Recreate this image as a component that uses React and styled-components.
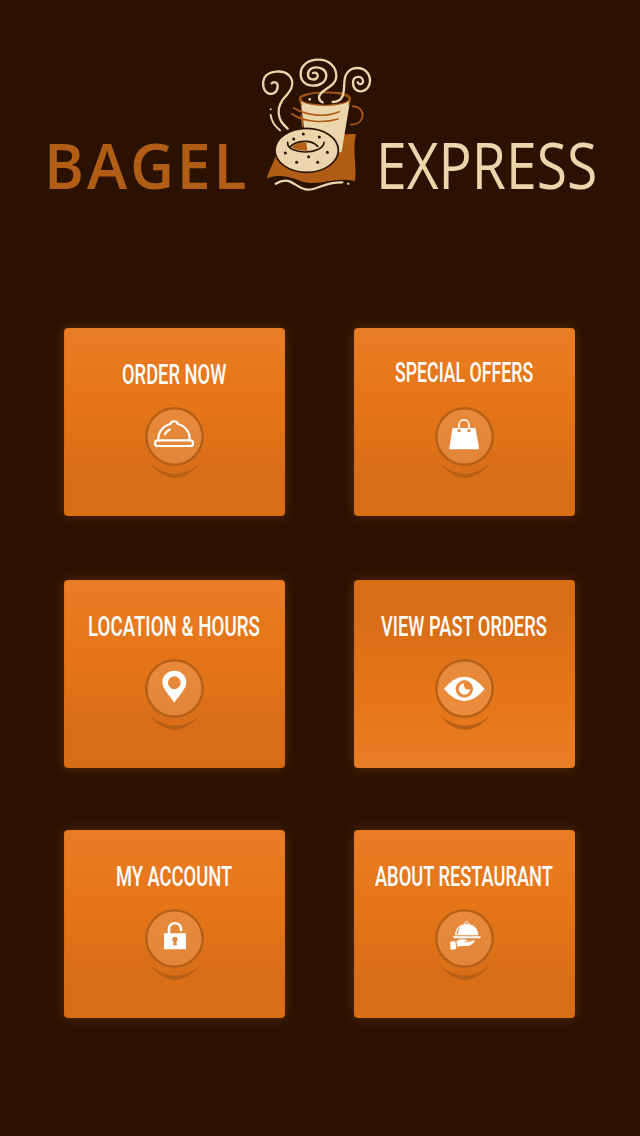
import { useLayoutEffect, useRef, useState } from "react";
import styled, { createGlobalStyle } from "styled-components";

const GlobalStyle = createGlobalStyle`
body{
  margin:0;
  background-color:#2b1200;
}
`;

const Page = styled.div`
  box-sizing:border-box;
  width:640px;
  height:1136px;
  padding-top:50px;
  background-color:#2b1200;
  overflow:hidden;
`;

const Header = styled.header`
  display:flex;
  align-items:flex-start;
  height:278px;
  padding-left:44px;
`;

const Word = styled.div`
  width:${props => props.$width}px;
  margin-top:71px;
  color:${props => props.$color};
  font-family:"Open Sans", sans-serif;
  font-size:64px;
  font-weight:${props => props.$weight};
  letter-spacing:${props => props.$spacing || 0}px;
  line-height:88px;
`;

const LogoArt = styled.svg`
  flex:none;
  width:130px;
  height:150px;
  margin:0 -4px 0 4px;
`;

const Menu = styled.nav`
  display:grid;
  grid-template-columns:221px 221px;
  grid-template-rows:188px 188px 188px;
  column-gap:69px;
  row-gap:64px;
  margin-left:64px;
`;

const Card = styled.a`
  display:flex;
  flex-direction:column;
  align-items:center;
  box-sizing:border-box;
  height:188px;
  margin-top:${props => props.$shift || 0}px;
  padding-top:${props => props.$top || 30}px;
  border-radius:4px;
  color:#fff;
  text-decoration:none;
  background:linear-gradient(${props => props.$flip ? "to top" : "to bottom"}, #e97d25 0%, #e67517 40%, #d96e17 80%, #d96e17 100%);
  box-shadow:0 0 12px rgba(232,124,36,.25), inset 0 0 1px rgba(150,70,5,.7);
`;

const Title = styled.div`
  width:${props => props.$width}px;
  height:${props => props.$height || 49}px;
  font-family:Roboto, sans-serif;
  font-size:28px;
  font-weight:500;
  line-height:34px;
`;

const Fitted = styled.span`
  display:inline-block;
  white-space:nowrap;
  transform-origin:left center;
`;

const Badge = styled.div`
  width:59px;
  height:59px;
  border-radius:50%;
  background-color:rgba(255,240,220,.18);
  box-shadow:inset 0 0 0 2.5px #b65f15;
`;

const Icon = styled.svg`
  display:block;
  width:59px;
  height:59px;
  fill:#fff;
`;

const Crescent = styled.svg`
  display:block;
  width:52px;
  height:16px;
  margin-top:-3px;
  fill:#b65f15;
`;

// squeezes a line of text to the width of its box
function FitText({ width, children }) {
  const ref = useRef(null);
  const [scale, setScale] = useState(1);
  useLayoutEffect(() => {
    setScale(width / ref.current.offsetWidth);
  }, [width, children]);
  return (
    <Fitted ref={ref} style={{ transform: `scaleX(${scale})` }}>{children}</Fitted>
  );
}

function ClocheIcon() {
  return (
    <Icon viewBox="273 266 177 177">
      <g fill="none" stroke="#fff" strokeWidth="6.5" strokeLinecap="round" strokeLinejoin="round">
        <path d="M313 365C312 342 326 323 350 317C351 306 370 306 371 317C395 323 408 342 407 365" />
        <rect x="303" y="366" width="114" height="17" rx="8.5" />
        <path d="M333 347Q338 338 347 334" strokeWidth="7" />
      </g>
    </Icon>
  );
}

function BagIcon() {
  return (
    <Icon viewBox="273 266 177 177">
      <path d="M345 333V320C345 300 375 300 375 320V333" fill="none" stroke="#fff" strokeWidth="5" />
      <path fillRule="evenodd" d="M328 329H392Q394 329 395 332L405 389Q405 393 402 393H318Q315 393 316 389L325 332Q326 329 328 329ZM345 332a5 5 0 1 0 .1 0ZM375 332a5 5 0 1 0 .1 0Z" />
    </Icon>
  );
}

function PinIcon() {
  return (
    <Icon viewBox="273 266 177 177">
      <path fillRule="evenodd" d="M361 398C352 380 325 358 325 336A36 35 0 0 1 397 336C397 358 370 380 361 398ZM361 318a19 19 0 1 0 .1 0Z" />
    </Icon>
  );
}

function EyeIcon() {
  return (
    <Icon viewBox="273 266 177 177">
      <path fillRule="evenodd" d="M300 356Q329 319 361 319Q393 319 422 356Q393 392 361 392Q329 392 300 356ZM361 330a26 26 0 1 0 .1 0Z" />
      <path d="M360 339A17 17 0 1 0 378 356Q369 360 364 355Q358 350 360 339Z" />
    </Icon>
  );
}

function LockIcon() {
  return (
    <Icon viewBox="273 266 177 177">
      <path d="M345 342V326C345 303 381 303 381 326V329" fill="none" stroke="#fff" strokeWidth="7.5" strokeLinecap="round" />
      <path fillRule="evenodd" d="M330 339H396V387H330ZM363 349A8 8 0 0 0 359 364L357 375H369L367 364A8 8 0 0 0 363 349Z" />
    </Icon>
  );
}

function ServeIcon() {
  return (
    <Icon viewBox="273 266 177 177">
      <circle cx="368" cy="310" r="5.5" fill="none" stroke="#fff" strokeWidth="3" />
      <path fillRule="evenodd" d="M333 345C333 323 349 311 368 311C387 311 403 323 403 345ZM338 342H343C342 332 345 325 350 319C341 325 338 333 338 342Z" />
      <path d="M326 348H411L408 354H332Q328 354 326 348Z" />
      <path d="M318 364L334 362L337 386L320 388Z" />
      <path d="M337 363C344 357 353 356 359 357L370 359C374 361 371 363 359 365C370 368 379 362 391 360C394 361 391 365 385 370C377 377 370 378 361 377C352 376 346 378 340 380Z" />
    </Icon>
  );
}

function Logo() {
  return (
    <LogoArt viewBox="0 0 390 450" fill="none" strokeLinecap="round" strokeLinejoin="round">
      <path d="M77 299C79 336 56 353 51 385C94 369 127 385 158 395C214 409 251 379 315 393C321 345 306 299 318 253C291 250 286 257 258 251L100 287Z" fill="#b15d16" />
      <path d="M151 148L164 248C180 293 229 310 275 306L301 148Z" fill="#ebd5ad" />
      <path d="M154 165L148 144C151 125 298 116 301 145L297 164" stroke="#a75718" strokeWidth="4" />
      <ellipse cx="225" cy="147" rx="73" ry="19" fill="#2b1200" stroke="#a75718" strokeWidth="4" />
      <path d="M131 174C164 194 220 205 268 185M126 192C163 218 225 219 264 207M154 195L158 230M308 169C348 168 350 224 303 224" stroke="#b15d16" strokeWidth="5" />
      <g stroke="#ebd5ad" strokeWidth="7">
        <path d="M65 100C72 93 84 97 83 110C82 127 68 135 55 130C38 122 36 98 43 84C55 62 98 58 117 76C134 95 126 117 112 133C94 150 84 166 86 190C88 212 98 222 113 236" />
        <path d="M189 69C198 65 205 72 203 80C199 92 175 92 174 75C173 60 184 52 198 52C218 52 229 63 229 77C228 96 211 107 190 107C166 107 152 93 152 72C152 46 174 29 205 29C237 29 259 50 259 78C259 113 207 118 207 143Q208 154 218 157" />
        <path d="M323 97C328 106 340 103 339 92C337 76 309 76 309 98C309 116 321 125 334 124C350 122 360 108 360 92C360 70 344 54 322 54C296 54 284 74 283 98C282 132 280 155 248 156" />
        <path d="M62 195Q65 221 90 241" strokeWidth="6" />
        <path d="M77 401C91 393 103 388 119 394C143 405 151 418 174 419C205 419 222 396 277 397" />
      </g>
      <circle cx="179" cy="148" r="4" fill="#ebd5ad" />
      <circle cx="62" cy="178" r="3" fill="#ebd5ad" />
      <circle cx="295" cy="401" r="3.5" fill="#ebd5ad" />
      <ellipse cx="170" cy="301" rx="95" ry="66" fill="#ebd5ad" stroke="#2b1200" strokeWidth="5" />
      <path d="M124 292C140 276 158 276 169 279L172 302C153 302 136 300 124 292Z" fill="#b15d16" />
      <path d="M113 277C109 316 221 315 222 277M119 291C139 271 184 267 203 289" stroke="#2b1200" strokeWidth="5" />
      <g fill="#2b1200">
        <circle cx="160" cy="252" r="4.5" />
        <circle cx="131" cy="267" r="4.5" />
        <circle cx="208" cy="261" r="4.5" />
        <circle cx="106" cy="309" r="4.5" />
        <circle cx="140" cy="337" r="4.5" />
        <circle cx="176" cy="320" r="4.5" />
        <circle cx="203" cy="337" r="4.5" />
        <circle cx="232" cy="307" r="4.5" />
      </g>
    </LogoArt>
  );
}

const items = [
  { title: "ORDER NOW", width: 105, icon: <ClocheIcon /> },
  { title: "SPECIAL OFFERS", width: 139, icon: <BagIcon />, top: 28, height: 51 },
  { title: "LOCATION & HOURS", width: 173, icon: <PinIcon /> },
  { title: "VIEW PAST ORDERS", width: 167, icon: <EyeIcon />, flip: true },
  { title: "MY ACCOUNT", width: 117, icon: <LockIcon />, shift: -2 },
  { title: "ABOUT RESTAURANT", width: 179, icon: <ServeIcon />, shift: -2 },
];

export default function App() {
  return (
    <>
      <GlobalStyle />
      <Page>
        <Header>
          <Word $width={202} $color="#b15d16" $weight={600} $spacing={3}>
            <FitText width={205}>BAGEL</FitText>
          </Word>
          <Logo />
          <Word $width={221} $color="#ebd5ad" $weight={500}>
            <FitText width={221}>EXPRESS</FitText>
          </Word>
        </Header>
        <Menu>
          {items.map(item => (
            <Card key={item.title} $flip={item.flip} $top={item.top} $shift={item.shift}>
              <Title $width={item.width} $height={item.height}>
                <FitText width={item.width - 1}>{item.title}</FitText>
              </Title>
              <Badge>{item.icon}</Badge>
              <Crescent viewBox="283 435 156 48">
                <path d="M284 436Q361 499 438 436Q361 524 284 436Z" />
              </Crescent>
            </Card>
          ))}
        </Menu>
      </Page>
    </>
  );
}
